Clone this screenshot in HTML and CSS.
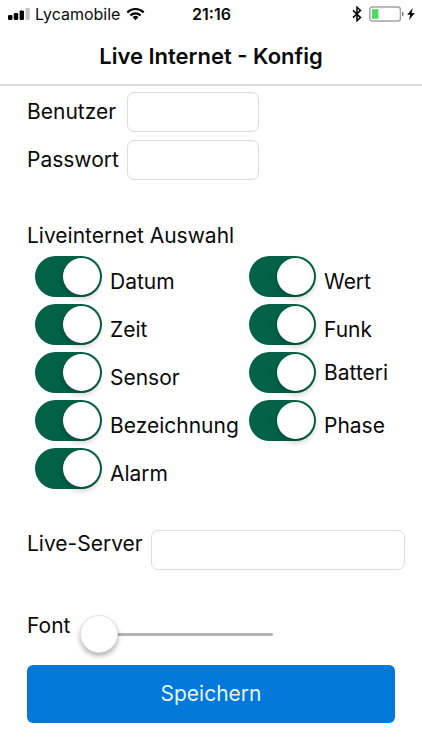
FILE: index.html
```html
<!DOCTYPE html>
<html lang="de">
<head>
<meta charset="utf-8">
<meta name="viewport" content="width=device-width, initial-scale=1">
<title>Live Internet - Konfig</title>
<link rel="stylesheet" href="styles.css">
</head>
<body>
<div class="status">
  <div class="status-left">
    <svg class="signal" width="22" height="12" viewBox="0 0 22 12" aria-hidden="true">
      <rect x="0" y="7" width="4.4" height="5" rx="1.2"/>
      <rect x="5.8" y="5" width="4.4" height="7" rx="1.2"/>
      <rect x="11.6" y="2.6" width="4.4" height="9.4" rx="1.2"/>
      <rect x="17.4" y="0" width="4.4" height="12" rx="1.2" fill="#c4c4c4"/>
    </svg>
    <span>Lycamobile</span>
    <svg class="wifi" width="19" height="14" viewBox="0 0 20 14" aria-hidden="true">
      <g fill="none" stroke="#000" stroke-width="2.3">
        <path d="M1.4 5.3a12.2 12.2 0 0 1 17.2 0"/>
        <path d="M4.6 8.6a7.6 7.6 0 0 1 10.8 0"/>
      </g>
      <path d="M6.9 10.4a4.5 4.5 0 0 1 6.2 0L10 13.7z"/>
    </svg>
  </div>
  <time class="clock">21:16</time>
  <div class="status-right">
    <svg width="10" height="16" viewBox="0 0 10 16" aria-hidden="true">
      <path d="M1 4.4l7.5 7.2L5 14.8V1.2l3.5 3.2L1 11.6" fill="none" stroke="#000" stroke-width="1.5"/>
    </svg>
    <svg width="35" height="16" viewBox="0 0 35 16" aria-hidden="true">
      <rect x="0.8" y="1" width="30.6" height="14" rx="2.6" fill="#fff" stroke="#a2a2a2" stroke-width="1.4"/>
      <rect x="3" y="3.2" width="6.4" height="9.6" fill="#4cd964"/>
      <path d="M33 5.6q1.6 .5 1.6 2.4T33 10.4z" fill="#777"/>
    </svg>
    <svg width="8" height="12" viewBox="0 0 8 12" aria-hidden="true">
      <path d="M5.7 0L.2 6.8h3L2 12l5.8-7H4.6z"/>
    </svg>
  </div>
</div>
<header class="navbar"><h1>Live Internet - Konfig</h1></header>
<main>
  <form class="form">
    <div class="login">
      <label for="user">Benutzer</label><input class="field" id="user" type="text">
      <label for="pass">Passwort</label><input class="field" id="pass" type="password">
    </div>
    <h2 id="choice">Liveinternet Auswahl</h2>
    <div class="options" role="group" aria-labelledby="choice">
      <label class="option"><input class="toggle" type="checkbox" checked><span>Datum</span></label>
      <label class="option"><input class="toggle" type="checkbox" checked><span>Wert</span></label>
      <label class="option"><input class="toggle" type="checkbox" checked><span>Zeit</span></label>
      <label class="option"><input class="toggle" type="checkbox" checked><span>Funk</span></label>
      <label class="option"><input class="toggle" type="checkbox" checked><span>Sensor</span></label>
      <label class="option option-centered"><input class="toggle" type="checkbox" checked><span>Batteri</span></label>
      <label class="option"><input class="toggle" type="checkbox" checked><span>Bezeichnung</span></label>
      <label class="option"><input class="toggle" type="checkbox" checked><span>Phase</span></label>
      <label class="option"><input class="toggle" type="checkbox" checked><span>Alarm</span></label>
    </div>
    <div class="server">
      <label for="server">Live-Server</label><input class="field" id="server" type="text">
    </div>
    <div class="font-size">
      <label for="font">Font</label><input class="slider" id="font" type="range" min="0" max="100" value="0">
    </div>
    <button class="save" type="button">Speichern</button>
  </form>
</main>
</body>
</html>
```
FILE: styles.css
```css
* {
  box-sizing: border-box;
}

body {
  margin: 0;
  background: #fff;
  color: #0a0a0a;
  font-family: Inter, "Liberation Sans", sans-serif;
  font-size: 21px;
  line-height: 28px;
}

h1,
h2 {
  margin: 0;
}

.status {
  display: grid;
  grid-template-columns: 1fr auto 1fr;
  align-items: center;
  height: 28px;
  padding: 0 7px 0 8px;
  font-size: 16px;
}

.status-left,
.status-right {
  display: flex;
  align-items: center;
}

.status-left {
  gap: 5px;
}

.wifi {
  margin-left: 1px;
}

.status-right {
  justify-content: flex-end;
  gap: 3px;
}

.status-right svg:first-child {
  margin-right: 4px;
}

.clock {
  font-weight: 600;
}

.navbar {
  display: flex;
  align-items: center;
  justify-content: center;
  height: 58px;
  border-bottom: 2px solid #dcdcdc;
}

.navbar h1 {
  font-size: 22px;
  font-weight: 600;
}

.form {
  padding: 6px 27px 27px;
}

.login {
  display: grid;
  grid-template-columns: 92px 132px;
  column-gap: 8px;
  row-gap: 8px;
  align-items: center;
}

.field {
  width: 100%;
  min-width: 0;
  height: 40px;
  padding: 0 8px;
  border: 1px solid #dcdcdc;
  border-radius: 7px;
  background: #fff;
  font: inherit;
}

h2 {
  margin-top: 42px;
  font-size: 21px;
  font-weight: 400;
}

.options {
  display: grid;
  grid-template-columns: 214px 1fr;
  row-gap: 7px;
  margin-top: 6px;
  padding-left: 8px;
}

.option {
  display: flex;
  gap: 8px;
  height: 41px;
}

.option span {
  padding-top: 12px;
}

.option-centered span {
  padding-top: 7px;
}

.toggle {
  flex: none;
  width: 67px;
  height: 41px;
  margin: 0;
  padding: 2px;
  border-radius: 21px;
  background: #b4b4b4;
  appearance: none;
}

.toggle::before {
  content: "";
  display: block;
  width: 37px;
  height: 37px;
  border-radius: 50%;
  background: #fff;
  box-shadow: 0 3px 6px rgba(0, 0, 0, 0.25);
}

.toggle:checked {
  background: #036246;
}

.toggle:checked::before {
  margin-left: auto;
}

.server {
  display: flex;
  gap: 8px;
  margin: 41px -10px 0 0;
}

.server .field {
  flex: 1;
}

.font-size {
  display: flex;
  gap: 10px;
  margin-top: 42px;
}

.slider {
  width: 193px;
  height: 44px;
  margin: 0;
  background: none;
  appearance: none;
}

.slider::-webkit-slider-runnable-track {
  height: 3px;
  border-radius: 2px;
  background: #b2b2b2;
}

.slider::-webkit-slider-thumb {
  width: 38px;
  height: 38px;
  margin-top: -18px;
  border: 1px solid #e4e4e4;
  border-radius: 50%;
  background: #fff;
  box-shadow: 0 3px 5px rgba(0, 0, 0, 0.3);
  appearance: none;
}

.save {
  display: block;
  width: 100%;
  height: 58px;
  margin-top: 9px;
  border: 0;
  border-radius: 6px;
  background: #0278d9;
  color: #e4f5ff;
  font: inherit;
}
```
